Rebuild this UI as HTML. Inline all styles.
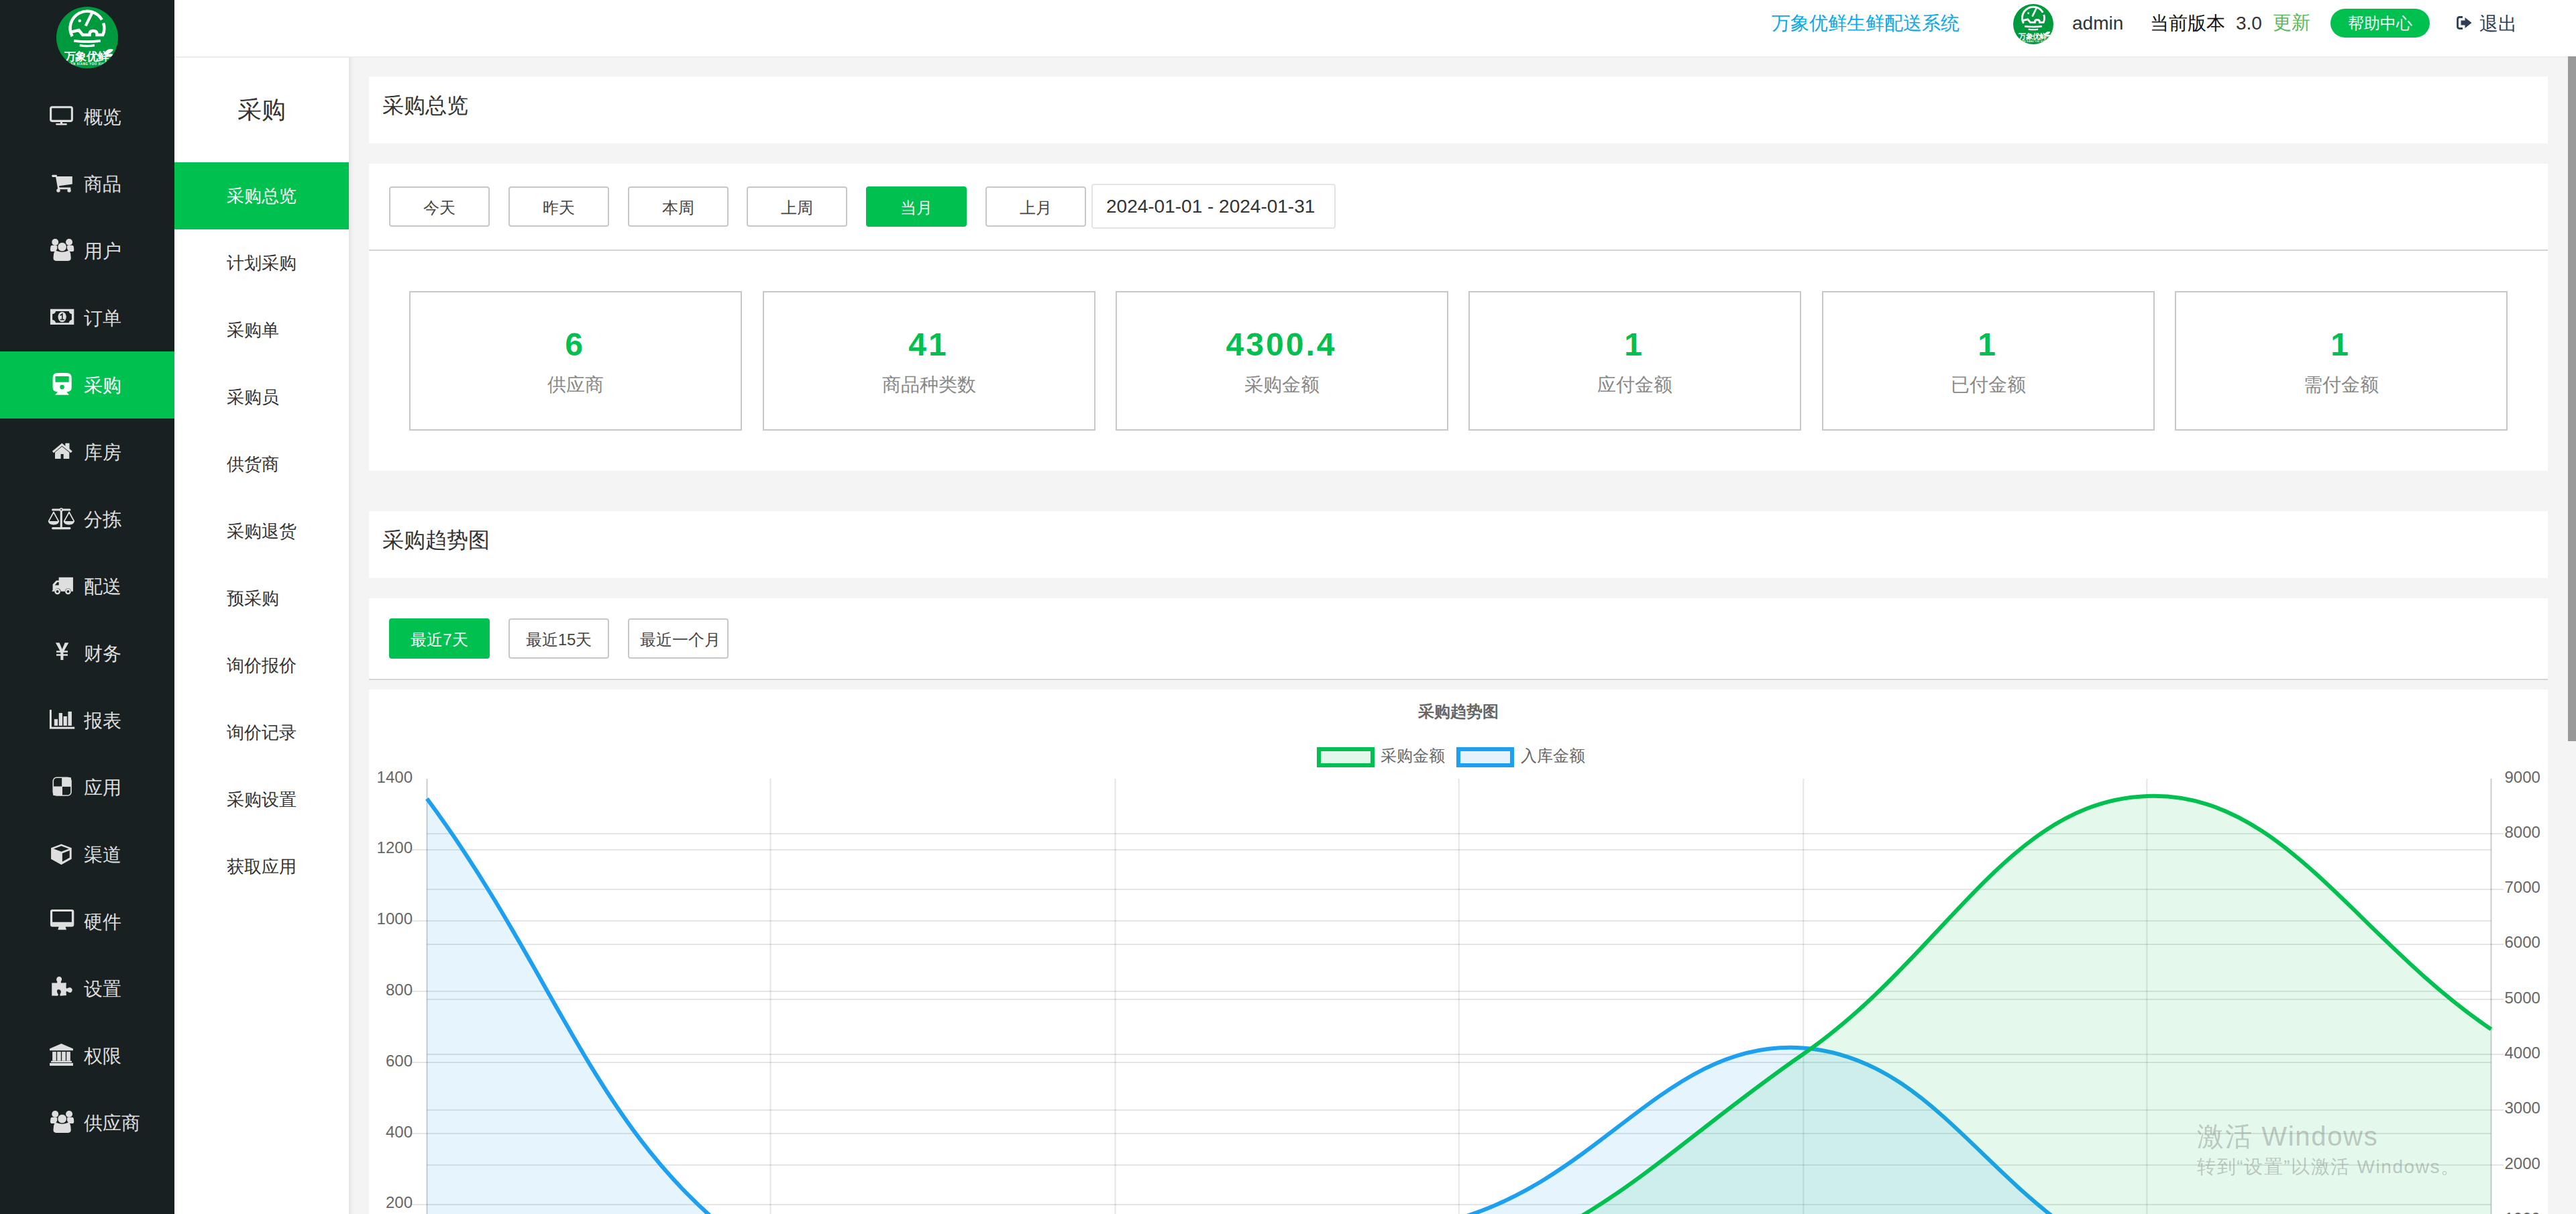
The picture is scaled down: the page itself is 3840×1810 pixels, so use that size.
<!DOCTYPE html><html><head><meta charset="utf-8"><style>
*{margin:0;padding:0;box-sizing:border-box}
html,body{width:3840px;height:1810px;overflow:hidden;background:#f4f4f4;font-family:"Liberation Sans",sans-serif;color:#333}
.a{position:absolute}
.nav{position:absolute;left:0;width:260px;height:100px;line-height:100px;font-size:28px;color:#dedede}
.nav span{position:absolute;left:125px;top:1px}
.nav svg{position:absolute;left:65px;top:21px;width:55px;height:55px}
.nav.on{background:#00c04f;color:#fff}
.sub{position:absolute;left:260px;width:260px;height:100px;line-height:100px;font-size:26px;color:#333}
.sub span{position:absolute;left:337px}
.sub.on{background:#00c04f;color:#fff}
.card{position:absolute;left:550px;width:3248px;background:#fff}
.btn{position:absolute;height:60px;width:150px;border:2px solid #c8c8c8;border-radius:4px;background:#fff;font-size:24px;line-height:59px;text-align:center;color:#444}
.btn.on{background:#00c04f;border-color:#00c04f;color:#fff}
.stat{position:absolute;top:434px;width:496px;height:208px;border:2px solid #c8c8c8;text-align:center}
.stat b{position:absolute;left:-2px;right:0;top:48px;font-size:48px;line-height:60px;color:#00c04f;font-weight:bold;letter-spacing:3px}
.stat i{position:absolute;left:0;right:0;top:118px;font-size:28px;line-height:40px;color:#888;font-style:normal}
</style></head><body>

<div class="a" style="left:0;top:0;width:260px;height:1810px;background:#182022"></div>
<svg class="a" style="left:84px;top:10px" width="92" height="92" viewBox="565 68 622 622"><defs><clipPath id="lc1"><circle cx="876" cy="379" r="311"/></clipPath></defs>
<circle cx="876" cy="379" r="311" fill="#009a3e"/>
<g clip-path="url(#lc1)" fill="none" stroke="#fff" stroke-linecap="butt">
<path d="M725 366 A171 171 0 0 1 1024 200" stroke-width="30"/>
<path d="M1039 233 A171 171 0 0 1 1035 350" stroke-width="30"/>
<path d="M930 120 L860 262" stroke-width="28"/>
<path d="M716 322 L792 305 L830 352 L900 352 L900 345 Q900 312 937 312 Q974 312 974 345 L974 352 L1045 352" stroke-width="30" stroke-linejoin="miter"/>
<path d="M742 412 Q876 428 1010 412" stroke-width="26"/>
<path d="M800 458 Q876 470 950 458" stroke-width="22"/>
</g>
<circle cx="800" cy="210" r="15" fill="#fff"/>
<g clip-path="url(#lc1)">
<text x="866" y="612" font-size="112" font-weight="bold" fill="#fff" text-anchor="middle" font-family="Liberation Sans, sans-serif" letter-spacing="-6">万象优鲜</text>
<path d="M1050 530 Q1090 480 1140 500 Q1110 550 1050 545Z M1060 555 Q1120 530 1150 555 Q1110 590 1060 560Z" fill="#fff"/>
<text x="876" y="655" font-size="30" font-weight="bold" fill="#fff" text-anchor="middle" font-family="Liberation Sans, sans-serif" letter-spacing="4">WAN XIANG YOU XIAN</text>
</g>
</svg>
<div class="nav" style="top:124px"><svg viewBox="0 0 1214 1214"><rect x="235" y="325" width="700" height="455" rx="45" fill="none" stroke="#dedede" stroke-width="68"/><rect x="550" y="790" width="70" height="80" fill="#dedede"/><rect x="400" y="860" width="370" height="55" rx="25" fill="#dedede"/></svg><span>概览</span></div>
<div class="nav" style="top:224px"><svg viewBox="0 0 1214 1214"><path d="M270 380 Q270 350 300 350 L430 350 L445 400 L945 400 L945 650 L510 710 L520 760 L890 760 L890 820 L470 820 L400 420 L300 420 Q270 420 270 380Z" fill="#dedede"/><circle cx="485" cy="860" r="60" fill="#dedede"/><circle cx="840" cy="860" r="60" fill="#dedede"/></svg><span>商品</span></div>
<div class="nav" style="top:324px"><svg viewBox="0 0 1214 1214"><circle cx="380" cy="355" r="110" fill="#dedede"/><circle cx="840" cy="355" r="110" fill="#dedede"/><path d="M230 500 Q240 455 290 460 L450 470 L450 560 L400 660 L250 660 Q220 650 220 600Z" fill="#dedede"/><path d="M990 500 Q980 455 930 460 L770 470 L770 560 L820 660 L970 660 Q1000 650 1000 600Z" fill="#dedede"/><circle cx="610" cy="510" r="150" fill="#dedede" stroke="#182022" stroke-width="22"/><path d="M330 760 Q340 640 430 640 Q510 680 610 680 Q710 680 790 640 Q880 640 890 760 L900 880 Q900 970 810 970 L410 970 Q320 970 320 880Z" fill="#dedede"/></svg><span>用户</span></div>
<div class="nav" style="top:424px"><svg viewBox="0 0 1214 1214"><path d="M220 350 L1000 350 L1000 860 L220 860Z M400 420 Q380 500 290 515 L290 700 Q380 715 400 800 L830 800 Q850 715 925 700 L925 515 Q850 500 830 420Z" fill="#dedede" fill-rule="evenodd"/><ellipse cx="610" cy="608" rx="135" ry="168" fill="#dedede"/><path d="M545 560 L615 510 L615 690 M545 695 L680 695" stroke="#182022" stroke-width="35" fill="none"/></svg><span>订单</span></div>
<div class="nav on" style="top:524px"><svg viewBox="0 0 1214 1214"><path d="M300 400 Q300 250 470 245 L750 245 Q920 250 920 400 L920 740 Q920 850 760 870 L840 965 L375 965 L465 870 Q300 850 300 740Z M385 355 L385 548 L832 548 L832 355Z" fill="#fff" fill-rule="evenodd"/><ellipse cx="608" cy="708" rx="72" ry="75" fill="#00c04f"/></svg><span>采购</span></div>
<div class="nav" style="top:624px"><svg viewBox="0 0 1214 1214"><path d="M285 615 L605 350 L715 440 L715 350 L850 350 L850 530 L945 610 L895 665 L605 435 L330 665Z" fill="#dedede"/><path d="M375 650 L605 460 L845 650 L845 860 L655 860 L655 705 L565 705 L565 860 L375 860Z" fill="#dedede"/></svg><span>库房</span></div>
<div class="nav" style="top:724px"><svg viewBox="0 0 1214 1214"><path d="M300 330 L860 330 M580 330 L580 930 M300 940 L860 940" stroke="#dedede" stroke-width="68" stroke-linecap="round"/><circle cx="580" cy="330" r="60" fill="#dedede"/><circle cx="580" cy="330" r="22" fill="#182022"/><path d="M330 410 L170 705 M330 410 L490 705 M840 410 L680 705 M840 410 L1000 705" stroke="#dedede" stroke-width="40" stroke-linecap="round"/><path d="M150 705 L510 705 Q500 820 330 825 Q160 820 150 705Z M655 705 L1015 705 Q1005 820 835 825 Q665 820 655 705Z" fill="#dedede"/></svg><span>分拣</span></div>
<div class="nav" style="top:824px"><svg viewBox="0 0 1214 1214"><path d="M500 350 L970 350 L970 810 L905 810 A100 100 0 0 0 705 810 L565 810 A100 100 0 0 0 365 810 L270 810 L300 760 L300 580 L420 455 L500 455Z M370 605 L500 605 L500 510 L455 510Z" fill="#dedede" fill-rule="evenodd"/><circle cx="455" cy="815" r="95" fill="#dedede"/><circle cx="455" cy="815" r="42" fill="#182022"/><circle cx="805" cy="815" r="95" fill="#dedede"/><circle cx="805" cy="815" r="42" fill="#182022"/></svg><span>配送</span></div>
<div class="nav" style="top:924px"><svg viewBox="0 0 1214 1214"><path d="M395 295 L520 295 L610 510 L700 295 L825 295 L675 555 L795 555 L795 615 L650 615 L650 665 L795 665 L795 725 L650 725 L650 860 L560 860 L560 725 L420 725 L420 665 L560 665 L560 615 L420 615 L420 555 L540 555Z" fill="#dedede"/></svg><span>财务</span></div>
<div class="nav" style="top:1024px"><svg viewBox="0 0 1214 1214"><path d="M230 295 L230 890 L1020 890" stroke="#dedede" stroke-width="65" fill="none" stroke-linejoin="miter"/><rect x="350" y="600" width="115" height="215" fill="#dedede"/><rect x="502" y="398" width="115" height="417" fill="#dedede"/><rect x="652" y="508" width="117" height="307" fill="#dedede"/><rect x="805" y="350" width="120" height="465" fill="#dedede"/></svg><span>报表</span></div>
<div class="nav" style="top:1124px"><svg viewBox="0 0 1214 1214"><rect x="315" y="315" width="590" height="590" rx="110" fill="none" stroke="#dedede" stroke-width="36"/><rect x="605" y="315" width="300" height="295" fill="#dedede"/><rect x="315" y="610" width="300" height="295" fill="#dedede"/><path d="M905 400 L905 610 L605 610 L605 315 L820 315 Q905 315 905 400Z M315 820 L315 610 L615 610 L615 905 L400 905 Q315 905 315 820Z" fill="#dedede"/></svg><span>应用</span></div>
<div class="nav" style="top:1224px"><svg viewBox="0 0 1214 1214"><path d="M245 425 L583 300 L920 425 L920 790 L583 975 L245 790Z M330 450 L583 545 L835 450 L583 360Z M615 600 L615 880 L855 745 L855 510Z" fill="#dedede" fill-rule="evenodd"/></svg><span>渠道</span></div>
<div class="nav" style="top:1324px"><svg viewBox="0 0 1214 1214"><path d="M220 310 Q220 245 290 245 L925 245 Q1000 245 1000 310 L1000 745 Q1000 810 925 810 L720 810 L750 910 L470 910 L500 810 L290 810 Q220 810 220 745Z M290 310 L290 655 L925 655 L925 310Z" fill="#dedede" fill-rule="evenodd"/></svg><span>硬件</span></div>
<div class="nav" style="top:1424px"><svg viewBox="0 0 1214 1214"><path d="M270 450 L440 455 Q460 430 440 400 Q410 340 430 300 Q460 245 510 245 Q570 245 595 300 Q610 345 575 400 Q555 430 580 455 L745 445 L740 620 Q760 650 800 620 Q860 590 900 610 Q950 650 945 690 Q935 760 880 770 Q830 775 790 740 Q760 720 740 745 L750 860 L560 880 Q520 860 550 810 Q590 750 560 700 Q520 660 470 670 Q430 690 440 740 Q450 790 480 820 Q490 870 450 880 L270 870Z" fill="#dedede"/></svg><span>设置</span></div>
<div class="nav" style="top:1524px"><svg viewBox="0 0 1214 1214"><path d="M583 245 L970 410 L970 470 L200 470 L200 410Z" fill="#dedede"/><rect x="290" y="510" width="125" height="300" fill="#dedede"/><rect x="445" y="510" width="125" height="300" fill="#dedede"/><rect x="600" y="510" width="125" height="300" fill="#dedede"/><rect x="755" y="510" width="125" height="300" fill="#dedede"/><rect x="245" y="810" width="680" height="50" fill="#dedede"/><rect x="200" y="880" width="770" height="90" fill="#dedede"/></svg><span>权限</span></div>
<div class="nav" style="top:1624px"><svg viewBox="0 0 1214 1214"><circle cx="380" cy="355" r="110" fill="#dedede"/><circle cx="840" cy="355" r="110" fill="#dedede"/><path d="M230 500 Q240 455 290 460 L450 470 L450 560 L400 660 L250 660 Q220 650 220 600Z" fill="#dedede"/><path d="M990 500 Q980 455 930 460 L770 470 L770 560 L820 660 L970 660 Q1000 650 1000 600Z" fill="#dedede"/><circle cx="610" cy="510" r="150" fill="#dedede" stroke="#182022" stroke-width="22"/><path d="M330 760 Q340 640 430 640 Q510 680 610 680 Q710 680 790 640 Q880 640 890 760 L900 880 Q900 970 810 970 L410 970 Q320 970 320 880Z" fill="#dedede"/></svg><span>供应商</span></div>
<div class="a" style="left:260px;top:0;width:3580px;height:84px;background:#fff"></div>
<div class="a" style="left:260px;top:84px;width:3580px;height:2px;background:#ececec"></div>
<div class="a" style="left:2641px;top:15px;font-size:28px;line-height:40px;color:#0aa8ea;white-space:nowrap">万象优鲜生鲜配送系统</div>
<svg class="a" style="left:3001px;top:6px" width="60" height="60" viewBox="565 68 622 622"><defs><clipPath id="lc2"><circle cx="876" cy="379" r="311"/></clipPath></defs>
<circle cx="876" cy="379" r="311" fill="#009a3e"/>
<g clip-path="url(#lc2)" fill="none" stroke="#fff" stroke-linecap="butt">
<path d="M725 366 A171 171 0 0 1 1024 200" stroke-width="30"/>
<path d="M1039 233 A171 171 0 0 1 1035 350" stroke-width="30"/>
<path d="M930 120 L860 262" stroke-width="28"/>
<path d="M716 322 L792 305 L830 352 L900 352 L900 345 Q900 312 937 312 Q974 312 974 345 L974 352 L1045 352" stroke-width="30" stroke-linejoin="miter"/>
<path d="M742 412 Q876 428 1010 412" stroke-width="26"/>
<path d="M800 458 Q876 470 950 458" stroke-width="22"/>
</g>
<circle cx="800" cy="210" r="15" fill="#fff"/>
<g clip-path="url(#lc2)">
<text x="866" y="612" font-size="112" font-weight="bold" fill="#fff" text-anchor="middle" font-family="Liberation Sans, sans-serif" letter-spacing="-6">万象优鲜</text>
<path d="M1050 530 Q1090 480 1140 500 Q1110 550 1050 545Z M1060 555 Q1120 530 1150 555 Q1110 590 1060 560Z" fill="#fff"/>
<text x="876" y="655" font-size="30" font-weight="bold" fill="#fff" text-anchor="middle" font-family="Liberation Sans, sans-serif" letter-spacing="4">WAN XIANG YOU XIAN</text>
</g>
</svg>
<div class="a" style="left:3089px;top:15px;font-size:28px;line-height:40px;color:#333;white-space:nowrap">admin</div>
<div class="a" style="left:3205px;top:15px;font-size:28px;line-height:40px;color:#111;white-space:nowrap">当前版本</div>
<div class="a" style="left:3333px;top:15px;font-size:28px;line-height:40px;color:#333;white-space:nowrap">3.0</div>
<div class="a" style="left:3388px;top:14px;font-size:28px;line-height:40px;color:#5cb85c;white-space:nowrap">更新</div>
<div class="a" style="left:3474px;top:13px;width:148px;height:43px;border-radius:22px;background:#00c04f;color:#fff;font-size:24px;line-height:43px;text-align:center">帮助中心</div>
<svg class="a" style="left:3662px;top:24px" width="24" height="20" viewBox="0 0 24 20"><path d="M9 1.5 L4.5 1.5 Q1.5 1.5 1.5 4.5 L1.5 15.5 Q1.5 18.5 4.5 18.5 L9 18.5" fill="none" stroke="#2f3e55" stroke-width="2.8"/><path d="M6.5 6.5 L12.5 6.5 L12.5 2 L22.5 10 L12.5 18 L12.5 13.5 L6.5 13.5Z" fill="#2f3e55"/></svg>
<div class="a" style="left:3696px;top:16px;font-size:28px;line-height:40px;color:#2f3e55;white-space:nowrap">退出</div>
<div class="a" style="left:3828px;top:84px;width:12px;height:1021px;background:#999"></div>
<div class="a" style="left:260px;top:86px;width:260px;height:1724px;background:#fff"></div><div class="a" style="left:260px;top:86px;width:5px;height:1724px;background:linear-gradient(to right,rgba(0,0,0,0.03),rgba(0,0,0,0))"></div><div class="a" style="left:520px;top:86px;width:8px;height:1724px;background:linear-gradient(to right,rgba(0,0,0,0.065),rgba(0,0,0,0.02) 60%,rgba(0,0,0,0))"></div>
<div class="a" style="left:260px;top:124px;width:260px;text-align:center;font-size:36px;line-height:80px;color:#333">采购</div>
<div class="a" style="left:260px;top:242px;width:260px;height:100px;line-height:100px;font-size:26px;color:#333;background:#00c04f;color:#fff;"><span style="position:absolute;left:78px">采购总览</span></div>
<div class="a" style="left:260px;top:342px;width:260px;height:100px;line-height:100px;font-size:26px;color:#333;"><span style="position:absolute;left:78px">计划采购</span></div>
<div class="a" style="left:260px;top:442px;width:260px;height:100px;line-height:100px;font-size:26px;color:#333;"><span style="position:absolute;left:78px">采购单</span></div>
<div class="a" style="left:260px;top:542px;width:260px;height:100px;line-height:100px;font-size:26px;color:#333;"><span style="position:absolute;left:78px">采购员</span></div>
<div class="a" style="left:260px;top:642px;width:260px;height:100px;line-height:100px;font-size:26px;color:#333;"><span style="position:absolute;left:78px">供货商</span></div>
<div class="a" style="left:260px;top:742px;width:260px;height:100px;line-height:100px;font-size:26px;color:#333;"><span style="position:absolute;left:78px">采购退货</span></div>
<div class="a" style="left:260px;top:842px;width:260px;height:100px;line-height:100px;font-size:26px;color:#333;"><span style="position:absolute;left:78px">预采购</span></div>
<div class="a" style="left:260px;top:942px;width:260px;height:100px;line-height:100px;font-size:26px;color:#333;"><span style="position:absolute;left:78px">询价报价</span></div>
<div class="a" style="left:260px;top:1042px;width:260px;height:100px;line-height:100px;font-size:26px;color:#333;"><span style="position:absolute;left:78px">询价记录</span></div>
<div class="a" style="left:260px;top:1142px;width:260px;height:100px;line-height:100px;font-size:26px;color:#333;"><span style="position:absolute;left:78px">采购设置</span></div>
<div class="a" style="left:260px;top:1242px;width:260px;height:100px;line-height:100px;font-size:26px;color:#333;"><span style="position:absolute;left:78px">获取应用</span></div>
<div class="card" style="top:114px;height:100px"><div class="a" style="left:20px;top:-7px;font-size:32px;line-height:100px;color:#333">采购总览</div></div>
<div class="card" style="top:244px;height:458px"></div>
<div class="btn" style="left:580px;top:278px">今天</div>
<div class="btn" style="left:758px;top:278px">昨天</div>
<div class="btn" style="left:936px;top:278px">本周</div>
<div class="btn" style="left:1113px;top:278px">上周</div>
<div class="btn on" style="left:1291px;top:278px">当月</div>
<div class="btn" style="left:1469px;top:278px">上月</div>
<div class="a" style="left:1627px;top:274px;width:364px;height:67px;border:2px solid #e4e4e4;border-radius:4px;font-size:28px;line-height:64px;padding-left:20px;color:#333;white-space:nowrap">2024-01-01 - 2024-01-31</div>
<div class="a" style="left:550px;top:372px;width:3248px;height:2px;background:#d4d4d4"></div>
<div class="stat" style="left:610px"><b>6</b><i>供应商</i></div>
<div class="stat" style="left:1137px"><b>41</b><i>商品种类数</i></div>
<div class="stat" style="left:1663px"><b>4300.4</b><i>采购金额</i></div>
<div class="stat" style="left:2189px"><b>1</b><i>应付金额</i></div>
<div class="stat" style="left:2716px"><b>1</b><i>已付金额</i></div>
<div class="stat" style="left:3242px"><b>1</b><i>需付金额</i></div>
<div class="card" style="top:762px;height:100px"><div class="a" style="left:20px;top:-7px;font-size:32px;line-height:100px;color:#333">采购趋势图</div></div>
<div class="card" style="top:892px;height:122px;border-bottom:2px solid #d4d4d4"></div>
<div class="btn on" style="left:580px;top:922px;white-space:nowrap;overflow:visible;">最近7天</div>
<div class="btn" style="left:758px;top:922px;white-space:nowrap;overflow:visible;">最近15天</div>
<div class="btn" style="left:936px;top:922px;white-space:nowrap;overflow:visible;text-indent:6px">最近一个月</div>
<div class="card" style="top:1028px;height:800px"></div>
<svg class="a" style="left:0;top:0" width="3840" height="1810" viewBox="0 0 3840 1810">
<defs><clipPath id="cc"><rect x="550" y="1027" width="3248" height="783"/></clipPath></defs>
<g clip-path="url(#cc)">
<text x="2174" y="1069" text-anchor="middle" font-size="24" font-weight="bold" fill="#666" font-family="Liberation Sans, sans-serif">采购趋势图</text>
<rect x="1966" y="1117" width="80" height="24" fill="#e3f8ec" stroke="#00c050" stroke-width="6"/>
<text x="2058" y="1135" font-size="24" fill="#666" font-family="Liberation Sans, sans-serif">采购金额</text>
<rect x="2174" y="1117" width="80" height="24" fill="#e6f3fc" stroke="#1ea0f2" stroke-width="6"/>
<text x="2267" y="1135" font-size="24" fill="#666" font-family="Liberation Sans, sans-serif">入库金额</text>
<line x1="614" y1="1796" x2="3713.5" y2="1796" stroke="rgba(0,0,0,0.1)" stroke-width="2"/>
<line x1="614" y1="1690" x2="3713.5" y2="1690" stroke="rgba(0,0,0,0.1)" stroke-width="2"/>
<line x1="614" y1="1584" x2="3713.5" y2="1584" stroke="rgba(0,0,0,0.1)" stroke-width="2"/>
<line x1="614" y1="1478" x2="3713.5" y2="1478" stroke="rgba(0,0,0,0.1)" stroke-width="2"/>
<line x1="614" y1="1373" x2="3713.5" y2="1373" stroke="rgba(0,0,0,0.1)" stroke-width="2"/>
<line x1="614" y1="1267" x2="3713.5" y2="1267" stroke="rgba(0,0,0,0.1)" stroke-width="2"/>
<line x1="636.5" y1="1819" x2="3732" y2="1819" stroke="rgba(0,0,0,0.1)" stroke-width="2"/>
<line x1="636.5" y1="1737" x2="3732" y2="1737" stroke="rgba(0,0,0,0.1)" stroke-width="2"/>
<line x1="636.5" y1="1655" x2="3732" y2="1655" stroke="rgba(0,0,0,0.1)" stroke-width="2"/>
<line x1="636.5" y1="1572" x2="3732" y2="1572" stroke="rgba(0,0,0,0.1)" stroke-width="2"/>
<line x1="636.5" y1="1490" x2="3732" y2="1490" stroke="rgba(0,0,0,0.1)" stroke-width="2"/>
<line x1="636.5" y1="1408" x2="3732" y2="1408" stroke="rgba(0,0,0,0.1)" stroke-width="2"/>
<line x1="636.5" y1="1326" x2="3732" y2="1326" stroke="rgba(0,0,0,0.1)" stroke-width="2"/>
<line x1="636.5" y1="1243" x2="3732" y2="1243" stroke="rgba(0,0,0,0.1)" stroke-width="2"/>
<line x1="1148.5" y1="1161" x2="1148.5" y2="1850" stroke="rgba(0,0,0,0.1)" stroke-width="2"/>
<line x1="1662.5" y1="1161" x2="1662.5" y2="1850" stroke="rgba(0,0,0,0.1)" stroke-width="2"/>
<line x1="2174.7" y1="1161" x2="2174.7" y2="1850" stroke="rgba(0,0,0,0.1)" stroke-width="2"/>
<line x1="2688.3" y1="1161" x2="2688.3" y2="1850" stroke="rgba(0,0,0,0.1)" stroke-width="2"/>
<line x1="3200.3" y1="1161" x2="3200.3" y2="1850" stroke="rgba(0,0,0,0.1)" stroke-width="2"/>
<line x1="636.5" y1="1161" x2="636.5" y2="1850" stroke="rgba(0,0,0,0.2)" stroke-width="2"/>
<line x1="3713.5" y1="1161" x2="3713.5" y2="1850" stroke="rgba(0,0,0,0.2)" stroke-width="2"/>
<text x="615" y="1801.2" text-anchor="end" font-size="24" fill="#666" font-family="Liberation Sans, sans-serif">200</text>
<text x="615" y="1695.5" text-anchor="end" font-size="24" fill="#666" font-family="Liberation Sans, sans-serif">400</text>
<text x="615" y="1589.7" text-anchor="end" font-size="24" fill="#666" font-family="Liberation Sans, sans-serif">600</text>
<text x="615" y="1483.9" text-anchor="end" font-size="24" fill="#666" font-family="Liberation Sans, sans-serif">800</text>
<text x="615" y="1378.1" text-anchor="end" font-size="24" fill="#666" font-family="Liberation Sans, sans-serif">1000</text>
<text x="615" y="1272.4" text-anchor="end" font-size="24" fill="#666" font-family="Liberation Sans, sans-serif">1200</text>
<text x="615" y="1166.6" text-anchor="end" font-size="24" fill="#666" font-family="Liberation Sans, sans-serif">1400</text>
<text x="3733.5" y="1824.7" font-size="24" fill="#666" font-family="Liberation Sans, sans-serif">1000</text>
<text x="3733.5" y="1742.5" font-size="24" fill="#666" font-family="Liberation Sans, sans-serif">2000</text>
<text x="3733.5" y="1660.2" font-size="24" fill="#666" font-family="Liberation Sans, sans-serif">3000</text>
<text x="3733.5" y="1577.9" font-size="24" fill="#666" font-family="Liberation Sans, sans-serif">4000</text>
<text x="3733.5" y="1495.7" font-size="24" fill="#666" font-family="Liberation Sans, sans-serif">5000</text>
<text x="3733.5" y="1413.4" font-size="24" fill="#666" font-family="Liberation Sans, sans-serif">6000</text>
<text x="3733.5" y="1331.1" font-size="24" fill="#666" font-family="Liberation Sans, sans-serif">7000</text>
<text x="3733.5" y="1248.9" font-size="24" fill="#666" font-family="Liberation Sans, sans-serif">8000</text>
<text x="3733.5" y="1166.6" font-size="24" fill="#666" font-family="Liberation Sans, sans-serif">9000</text>
<path d="M636.5,1190.8 C841.6,1467.5 892.3,1714.4 1149.3,1882.5 C1302.6,1901.4 1457.3,1874.7 1662.2,1861.5 C1867.6,1848.3 1980.7,1873.2 2175.0,1816.5 C2391.0,1753.5 2489.1,1547.9 2687.8,1562.4 C2899.4,1577.8 2977.9,1817.6 3200.7,1891.2 C3388.2,1901.4 3508.4,1897.3 3713.5,1901.4 L3713.5,1901.4 L636.5,1901.4 Z" fill="rgba(30,159,242,0.11)"/>
<path d="M636.5,1190.8 C841.6,1467.5 892.3,1714.4 1149.3,1882.5 C1302.6,1901.4 1457.3,1874.7 1662.2,1861.5 C1867.6,1848.3 1980.7,1873.2 2175.0,1816.5 C2391.0,1753.5 2489.1,1547.9 2687.8,1562.4 C2899.4,1577.8 2977.9,1817.6 3200.7,1891.2 C3388.2,1901.4 3508.4,1897.3 3713.5,1901.4" fill="none" stroke="#1ea0f2" stroke-width="6" stroke-linecap="butt" stroke-linejoin="round"/>
<path d="M636.5,1901.4 C841.6,1901.4 944.2,1901.4 1149.3,1901.4 C1354.5,1901.3 1457.0,1901.4 1662.2,1901.0 C1867.3,1899.7 1987.0,1901.4 2175.0,1894.9 C2397.2,1823.6 2488.5,1709.4 2687.8,1571.8 C2898.7,1426.3 2992.0,1194.5 3200.7,1187.0 C3402.3,1179.6 3508.4,1395.5 3713.5,1534.6 L3713.5,1901.4 L636.5,1901.4 Z" fill="rgba(0,192,80,0.105)"/>
<path d="M636.5,1901.4 C841.6,1901.4 944.2,1901.4 1149.3,1901.4 C1354.5,1901.3 1457.0,1901.4 1662.2,1901.0 C1867.3,1899.7 1987.0,1901.4 2175.0,1894.9 C2397.2,1823.6 2488.5,1709.4 2687.8,1571.8 C2898.7,1426.3 2992.0,1194.5 3200.7,1187.0 C3402.3,1179.6 3508.4,1395.5 3713.5,1534.6" fill="none" stroke="#00c050" stroke-width="6" stroke-linecap="butt" stroke-linejoin="round"/>
<text x="3275" y="1708" font-size="40" letter-spacing="1.7" fill="rgba(120,120,120,0.4)" font-family="Liberation Sans, sans-serif">激活 Windows</text>
<text x="3275" y="1749" font-size="28" letter-spacing="1.6" fill="rgba(120,120,120,0.4)" font-family="Liberation Sans, sans-serif">转到“设置”以激活 Windows。</text>
</g></svg>
</body></html>
